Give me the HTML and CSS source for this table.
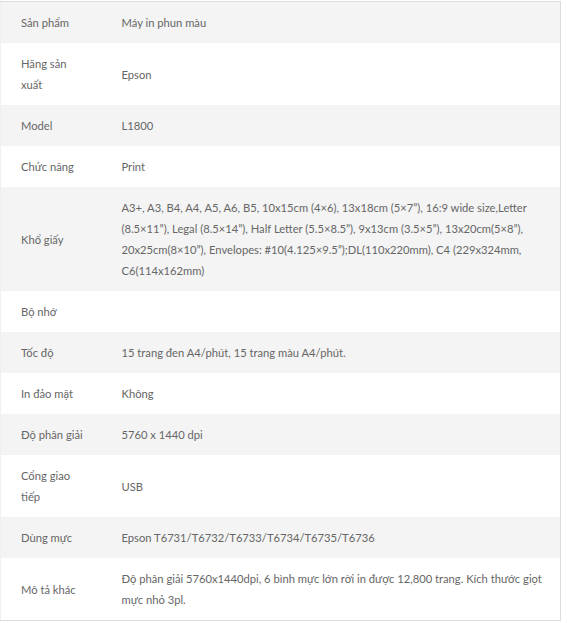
FILE: index.html
```html
<!DOCTYPE html>
<html lang="vi">
<head>
<meta charset="utf-8">
<link rel="stylesheet" href="styles.css">
</head>
<body>
<div class="wrap">
<table class="spec">
<colgroup><col class="col-label"><col class="col-value"></colgroup>
<tbody>
<tr><td class="label">Sản phẩm</td><td class="value">Máy in phun màu</td></tr>
<tr><td class="label">Hãng sản xuất</td><td class="value">Epson</td></tr>
<tr><td class="label">Model</td><td class="value">L1800</td></tr>
<tr><td class="label">Chức năng</td><td class="value">Print</td></tr>
<tr><td class="label">Khổ giấy</td><td class="value">A3+, A3, B4, A4, A5, A6, B5, 10x15cm (4×6), 13x18cm (5×7”), 16:9 wide size,Letter (8.5×11”), Legal (8.5×14”), Half Letter (5.5×8.5”), 9x13cm (3.5×5”), 13x20cm(5×8”), 20x25cm(8×10”), Envelopes: #10(4.125×9.5”);DL(110x220mm), C4 (229x324mm, C6(114x162mm)</td></tr>
<tr><td class="label">Bộ nhớ</td><td class="value"></td></tr>
<tr><td class="label">Tốc độ</td><td class="value">15 trang đen A4/phút, 15 trang màu A4/phút.</td></tr>
<tr><td class="label">In đảo mặt</td><td class="value">Không</td></tr>
<tr><td class="label">Độ phân giải</td><td class="value">5760 x 1440 dpi</td></tr>
<tr><td class="label">Cổng giao tiếp</td><td class="value">USB</td></tr>
<tr><td class="label">Dùng mực</td><td class="value">Epson T6731/T6732/T6733/T6734/T6735/T6736</td></tr>
<tr><td class="label">Mô tả khác</td><td class="value">Độ phân giải 5760x1440dpi, 6 bình mực lớn rời in được 12,800 trang. Kích thước giọt mực nhỏ 3pl.</td></tr>
</tbody>
</table>
</div>
</body>
</html>
```
FILE: styles.css
```css
html, body {
  margin: 0;
  padding: 0;
  background: #fff;
}
.wrap {
  padding-top: 1px;
}
.spec {
  width: 561px;
  table-layout: fixed;
  border-collapse: collapse;
  border: 1px solid #dcdcdc;
  border-left-color: #f0f0f0;
  font-family: Lato, "Noto Sans", sans-serif;
  font-size: 11.2px;
  line-height: 21px;
  color: #666;
}
.col-label {
  width: 101px;
}
.spec tr:nth-child(odd) {
  background: #f4f4f4;
}
.spec td {
  padding: 10px 20px;
  vertical-align: middle;
  text-align: left;
}
.spec td.label {
  padding-right: 12px;
}
.spec td.value {
  padding-right: 10px;
}
```
